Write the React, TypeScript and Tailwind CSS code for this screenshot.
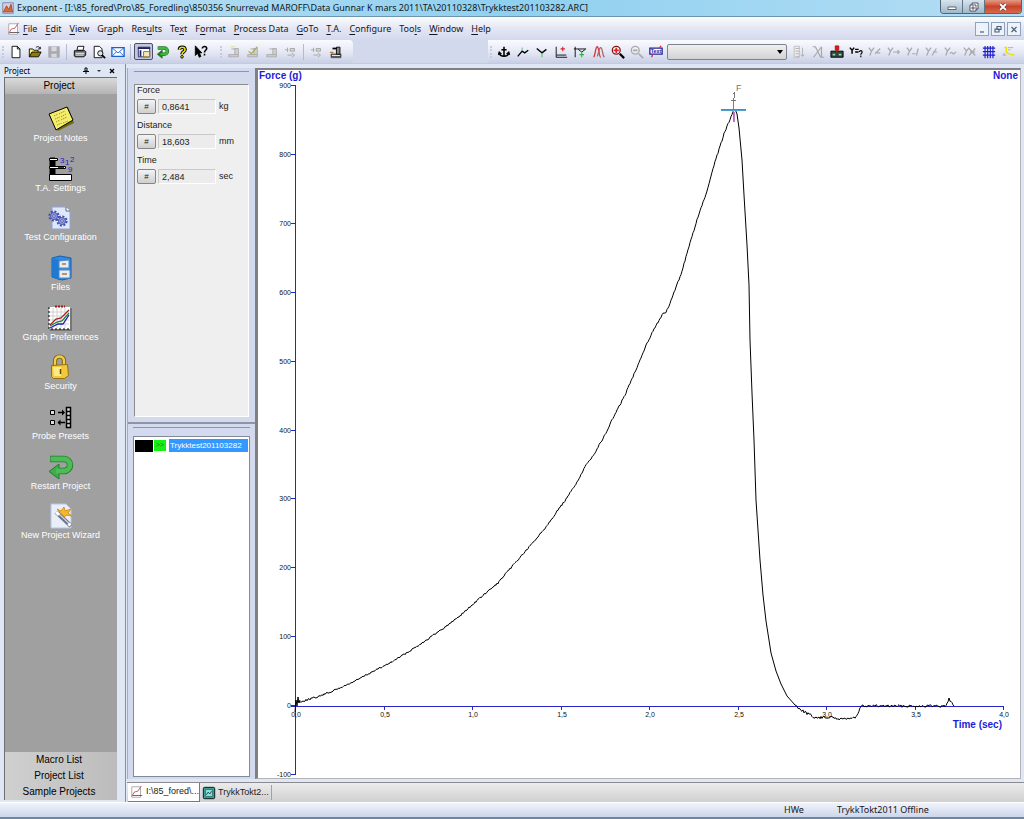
import type { ReactNode } from "react";

/* ---------- data ---------- */

const MENUS: [string, string, string][] = [
  ["", "F", "ile"],
  ["", "E", "dit"],
  ["", "V", "iew"],
  ["Gr", "a", "ph"],
  ["Res", "u", "lts"],
  ["Te", "x", "t"],
  ["F", "o", "rmat"],
  ["", "P", "rocess Data"],
  ["", "G", "oTo"],
  ["", "T", ".A."],
  ["", "C", "onfigure"],
  ["Too", "l", "s"],
  ["", "W", "indow"],
  ["", "H", "elp"],
];

const READOUTS = [
  { label: "Force", value: "0,8641", unit: "kg" },
  { label: "Distance", value: "18,603", unit: "mm" },
  { label: "Time", value: "2,484", unit: "sec" },
];

const CURVE: [number, number][] = [
  [298, 702], [303, 701], [310, 699], [320, 696], [330, 692], [340, 688],
  [355, 681], [370, 673], [390, 663], [408, 652], [425, 641], [448, 625],
  [462, 614], [480, 598], [498, 583], [515, 563], [531, 545], [545, 528],
  [558, 510], [567, 498], [580, 477], [585, 467], [594, 454], [605, 435],
  [612, 420], [625, 395], [634, 374], [642, 355], [648, 341], [655, 327],
  [663, 314], [666, 312], [669, 306], [675, 290], [681, 274], [688, 250],
  [697, 220], [708, 188], [715, 162], [724, 134], [730, 119], [734, 109],
];

const FALL =
  "735,109 737,114 739,128 742,160 744,195 747,245 749,285 750,340 752,393 754,440 755,470 756,500 758,530 760,560 763,595 766,621 771,653 776,671 781,684 787,696 795,705";

const TAIL: [number, number][] = [
  [795, 705], [803, 711], [810, 715], [816, 718], [830, 717], [838, 719],
  [855, 718], [858, 714], [861, 706], [946, 706], [949, 699], [954, 706],
];

function noisy(points: [number, number][], amplitude: number) {
  const out: string[] = [];
  let seed = 7;
  for (let i = 0; i < points.length - 1; i++) {
    const [x0, y0] = points[i];
    const [x1, y1] = points[i + 1];
    for (let x = x0; x < x1; x++) {
      seed = (seed * 1103515245 + 12345) % 2147483648;
      const jitter = (seed / 2147483648 - 0.5) * 2 * amplitude;
      out.push(`${x},${(y0 + ((y1 - y0) * (x - x0)) / (x1 - x0) + jitter).toFixed(1)}`);
    }
  }
  const last = points[points.length - 1];
  out.push(`${last[0]},${last[1]}`);
  return out.join(" ");
}

const RISE_POINTS = noisy(CURVE, 0.9);
const TAIL_POINTS = noisy(TAIL, 1.3);

/* ---------- icons ---------- */

function Glyph({ children, size = "size-4" }: { children: ReactNode; size?: string }) {
  return (
    <svg viewBox="0 0 16 16" className={`${size} shrink-0`} fill="none" stroke="#000" strokeWidth="1" aria-hidden="true">
      {children}
    </svg>
  );
}

const chartPage = (
  <Glyph size="size-[14px]">
    <path d="M2 2h10v12H2z" fill="#fff" stroke="#a9a3a3" />
    <path d="M13 1l-4 6-4 1-3 5" stroke="#c04a4a" />
    <path d="M3 12h11" stroke="#555" />
  </Glyph>
);

const arrowBack = (
  <Glyph size="size-[14px]">
    <path d="M2 3.500h7.500a3.500 3.500 0 0 1 0 7H6" stroke="#1c7a1c" strokeWidth="4" />
    <path d="M7 6v9L1.500 10.500z" fill="#1c7a1c" stroke="#1c7a1c" />
    <path d="M2 3.500h7.500a3.500 3.500 0 0 1 0 7H5" stroke="#43b843" strokeWidth="2.400" />
  </Glyph>
);

const grayMachine = (extra: ReactNode) => (
  <Glyph size="size-[14px]">
    <path d="M2 13.500h11V11H2zM9 11V4h4v7M5 4.500h5" stroke="#a8a8a8" fill="#d0d0d0" />
    {extra}
  </Glyph>
);

const grayFlow = (
  <Glyph size="size-[14px]">
    <path d="M1 5.500h4M4 3v5M7 4h5v3H7zM4 11.500h5M9 9l3 2.500L9 14" stroke="#a4a4a4" fill="#d4d4d4" />
  </Glyph>
);

const grayY = (tail: string) => (
  <Glyph size="size-[14px]">
    <path d="M1 3l3 4 3-4M4 7L2 12" stroke="#a9a9ae" strokeWidth="1.500" />
    <path d={tail} stroke="#a9a9ae" strokeWidth="1.400" />
  </Glyph>
);

type Tool = { name: string; icon: ReactNode; active?: boolean };

const FILE_TOOLS: Tool[] = [
  { name: "New", icon: <Glyph size="size-[14px]"><path d="M3.500 1.500h6l3 3v10h-9z" fill="#fff" /><path d="M9.500 1.500v3h3" /></Glyph> },
  { name: "Open", icon: <Glyph size="size-[14px]"><path d="M1.500 13.500v-9h4l1 1.500h5v2" fill="#ffef80" /><path d="M1.500 13.500l3-5.500h10.500l-3 5.500z" fill="#8c7a10" /><path d="M9 3c2-2 4-1 5 1M14 2v2.500h-2.500" /></Glyph> },
  { name: "Save", icon: <Glyph size="size-[14px]"><path d="M2 2h12v12H2z" fill="#a9a9b0" stroke="#a9a9b0" /><path d="M5 2h6v5H5zM5 10h6v4H5z" fill="#d8d8de" stroke="none" /></Glyph> },
];

const PRINT_TOOLS: Tool[] = [
  { name: "Print", icon: <Glyph size="size-[14px]"><path d="M4.500 6l1-4.500h7L11.500 6z" fill="#fff" /><path d="M1.500 6.500h12l1 1v4l-2 2h-10l-1-1z" fill="#777" /><path d="M3 9.500h10M3 11.500h9" stroke="#fff" /></Glyph> },
  { name: "Print Preview", icon: <Glyph size="size-[14px]"><path d="M2.500 1.500h6l3 3v10h-9z" fill="#fff" /><circle cx="9.500" cy="9.500" r="3" fill="#d8e4f0" /><path d="M11.500 11.500l3.500 3.500" strokeWidth="2" /></Glyph> },
  { name: "Mail", icon: <Glyph size="size-[14px]"><path d="M1 3h14v10H1z" fill="#fff" stroke="#1464d2" strokeWidth="1.500" /><path d="M1 3l7 6 7-6M1 13l5-5M15 13l-5-5" stroke="#1464d2" /></Glyph> },
];

const VIEW_TOOLS: Tool[] = [
  { name: "Project Bar", active: true, icon: <Glyph size="size-[14px]"><path d="M1.500 2.500h13v11h-13z" fill="#fff" stroke="#1f2360" /><path d="M1 3.500h14M4 6v7" stroke="#1f2360" strokeWidth="2" /><path d="M7.500 7.500h7v6h-7z" fill="#f4e9b4" stroke="#8a6a1a" /></Glyph> },
  { name: "Restart Project", icon: arrowBack },
  { name: "Help", icon: <Glyph size="size-[14px]"><path d="M5 5.500c0-4 6.500-4 6.500 0C11.500 8 8 7.500 8 10.500" strokeWidth="4" /><path d="M5 5.500c0-4 6.500-4 6.500 0C11.500 8 8 7.500 8 10.500" stroke="#f0e000" strokeWidth="1.800" /><circle cx="8" cy="13.500" r="1.500" fill="#f0e000" /></Glyph> },
  { name: "Context Help", icon: <Glyph size="size-[14px]"><path d="M1.500 1v11l2.500-2.500L6 14l2-1-2-4h3z" fill="#000" /><path d="M9.500 4c0-3 5-3 5 0 0 2-2.500 2-2.500 4.500M12 10v2" strokeWidth="1.800" /></Glyph> },
];

const TA_TOOLS: Tool[] = [
  { name: "Run Test", icon: grayMachine(<path d="M4 2h5" stroke="#d8d890" />) },
  { name: "Quick Test", icon: grayMachine(<path d="M3 7l3 3 7-8" stroke="#b0b050" strokeWidth="1.500" />) },
  { name: "Calibrate", icon: grayMachine(null) },
  { name: "Move Probe", icon: grayFlow },
];

const TA_TOOLS_2: Tool[] = [
  { name: "Connect", icon: grayFlow },
  { name: "Instrument", icon: <Glyph size="size-[14px]"><path d="M2 14.500h12" stroke="#555" /><path d="M2.500 10.500h11v3h-11z" fill="#e4e4e4" /><path d="M8.500 2.500h4v8h-4z" fill="#888" /><path d="M4 4h5" strokeWidth="2" /><path d="M1 8.500h4" stroke="#b07a40" strokeWidth="1.500" /></Glyph> },
];

const GRAPH_TOOLS: Tool[] = [
  { name: "Anchor", icon: <Glyph size="size-[14px]"><path d="M8 2v11M5 5.500h6M2.500 9c1 5 10 5 11 0" strokeWidth="1.800" /><path d="M1.500 11l1-3.500L5 10zM14.500 11l-1-3.500L11 10z" fill="#000" /></Glyph> },
  { name: "Peak", icon: <Glyph size="size-[14px]"><path d="M2 13l5-6 3 2 4-3" strokeWidth="1.500" /><path d="M7 3v3" stroke="#4b8" /></Glyph> },
  { name: "Trough", icon: <Glyph size="size-[14px]"><path d="M2 4l6 5 5-4" strokeWidth="1.500" /><path d="M8 10v4" stroke="#3b4" /></Glyph> },
  { name: "Threshold", icon: <Glyph size="size-[14px]"><path d="M2.500 2v12H15M3 11.500h11" /><path d="M10 2v5M7.500 4.500h5" stroke="#d22" strokeWidth="1.300" /></Glyph> },
  { name: "Baseline", icon: <Glyph size="size-[14px]"><path d="M2.500 2v12M1 4.500h14M6 5l4 3 4-3" /><path d="M10 8v6M7.500 11h5" stroke="#2b3" strokeWidth="1.300" /></Glyph> },
  { name: "Curves", icon: <Glyph size="size-[14px]"><path d="M2 14C4 10 4 2 6 2s2 12 4 12" stroke="#d33" strokeWidth="1.500" /><path d="M6 13C8 8 8 3 10 3s2 9 4 11" stroke="#a66" strokeWidth="1.500" /></Glyph> },
  { name: "Zoom In", icon: <Glyph size="size-[14px]"><circle cx="6" cy="6" r="4.500" fill="#fff" stroke="#7a1a1a" strokeWidth="1.500" /><path d="M6 3v6M3 6h6" stroke="#d22" strokeWidth="2" /><path d="M10 10l5 5" strokeWidth="2.500" /></Glyph> },
  { name: "Zoom Out", icon: <Glyph size="size-[14px]"><circle cx="6" cy="6" r="4.500" stroke="#aaa" strokeWidth="1.500" /><path d="M3.500 6h5M10 10l5 5" stroke="#aaa" strokeWidth="2" /></Glyph> },
  { name: "Text Label", icon: <Glyph size="size-[14px]"><path d="M1 3.500h14v7H1z" fill="#fff" stroke="#22229a" strokeWidth="1.500" /><text x="8" y="9" textAnchor="middle" fontFamily="Liberation Sans, sans-serif" fontSize="6" fontWeight="bold" fill="#22229a" stroke="none">Text</text><path d="M3 14l1-3M12 3l2-2" stroke="#d22" strokeWidth="1.500" /></Glyph> },
];

const RESULT_TOOLS: Tool[] = [
  { name: "Sort", icon: <Glyph size="size-[14px]"><path d="M2.500 1.500h6v13h-6z" fill="#eee" stroke="#bbb" /><path d="M4 4h4M4 7h4M4 10h4M4 13h4M12 3v10M10 11l2 2 2-2" stroke="#adadad" /></Glyph> },
  { name: "Delete", icon: <Glyph size="size-[14px]"><path d="M2 2h3l6 12h4M12 2L3 14M12 2v12" stroke="#a8a8a8" strokeWidth="1.400" /></Glyph> },
  { name: "Macro", icon: <Glyph size="size-[14px]"><path d="M1 7h14v7H1z" fill="#2b4a3c" /><path d="M3 11h3M10 11h3" stroke="#9fd0b0" strokeWidth="2" /><path d="M6 1h4v4L8 8 6 5z" fill="#e01818" stroke="#b01010" /></Glyph> },
  { name: "Y Query", icon: <Glyph size="size-[14px]"><path d="M1 3l2.500 3L6 3M3.500 6v4M7 5h4M7 8h4" strokeWidth="1.700" /><path d="M12 8c0-2 3-2 3 0s-1.500 1.500-1.500 3M13.500 12v2" strokeWidth="1.300" /></Glyph> },
  { name: "Y Divide", icon: grayY("M8 10l6-6M10 9h4") },
  { name: "Y Minus", icon: grayY("M7 8h7M12 6l2 2-2 2") },
  { name: "Y Integral", icon: grayY("M7 10h4M12 12l2-8") },
  { name: "Y Slope", icon: grayY("M8 12l5-8M9 8h5") },
  { name: "Y Smooth", icon: grayY("M7 10c2-5 3 3 5-1l2-1") },
  { name: "Y Cross", icon: grayY("M7 4l7 8M14 4l-7 8M8 8h6") },
  { name: "Grid", icon: <Glyph size="size-[14px]"><path d="M3.500 1v14M6.500 1v14M9.500 1v14M12.500 1v14M1 3.500h14M1 7.500h14M1 11.500h14" stroke="#1c1cd0" strokeWidth="1.300" /></Glyph> },
  { name: "Mark", icon: <Glyph size="size-[14px]"><path d="M2 11.500h4M4 3h2M8 3h6M8 5.500h3M3.500 9v3" stroke="#aaa" /><path d="M6 2v6c2 3 5 2 9 4" stroke="#ece400" strokeWidth="1.800" /></Glyph> },
];

function BigIcon({ children }: { children: ReactNode }) {
  return (
    <svg viewBox="0 0 26 26" className="size-[26px] overflow-visible" fill="none" stroke="#000" aria-hidden="true">
      {children}
    </svg>
  );
}

const gear = (cx: number, cy: number) => (
  <g>
    <circle cx={cx} cy={cy} r="4.500" stroke="#4450a8" strokeWidth="2.200" strokeDasharray="2 1.500" />
    <circle cx={cx} cy={cy} r="3.500" fill="#8f9be0" stroke="#4f5cb8" />
    <circle cx={cx} cy={cy} r="1.300" fill="#eef" stroke="#333a80" strokeWidth="0.700" />
  </g>
);

const PROJECT_ITEMS: { label: string; icon: ReactNode }[] = [
  {
    label: "Project Notes",
    icon: (
      <BigIcon>
        <path d="M1 9L20 1l6 16L10 25z" fill="#6e6a18" stroke="none" />
        <path d="M1 8L19 1l6 13L8 24z" fill="#f4ee6a" />
        <path d="M6 10l4-2M11 8l6-3M7 13l5-2M13 11l5-3M8 16l4-2M13 14l6-3M9 19l5-2M15 17l5-2" stroke="#8a7a20" strokeWidth="0.800" strokeDasharray="1.500 0.800" />
      </BigIcon>
    ),
  },
  {
    label: "T.A. Settings",
    icon: (
      <BigIcon>
        <path d="M2 2v22h5V2z" fill="#000" />
        <path d="M1.500 2.500h8v2h-8zM1.500 10.500h16v2h-16zM1.500 18.500h22v6h-22z" fill="#fff" />
        <path d="M10 11.500h6" stroke="#22c" />
        <g fill="#1c1cc8" stroke="none" fontFamily="Liberation Sans, sans-serif" fontSize="8">
          <text x="12" y="7">3</text>
          <text x="17" y="9">1</text>
          <text x="22" y="6">2</text>
          <text x="20" y="16">9</text>
        </g>
      </BigIcon>
    ),
  },
  {
    label: "Test Configuration",
    icon: (
      <BigIcon>
        <path d="M5 2h14l4 4v18H5z" fill="#dfe8fb" stroke="#8fa4d8" />
        <path d="M19 2v4h4" fill="#fff" stroke="#55658f" />
        {gear(7, 11)}
        {gear(15, 16)}
      </BigIcon>
    ),
  },
  {
    label: "Files",
    icon: (
      <BigIcon>
        <path d="M4 3l8-2 11 2v20l-9 2-10-3z" fill="#2f8be0" stroke="#1a5fae" />
        <path d="M4 3l7 2v20l-7-3z" fill="#1f7ad4" stroke="none" />
        <path d="M11 6l10-1v8H11zM11 15h11v8H11z" fill="#e4eefb" stroke="#5a86bc" />
        <path d="M14 9h4M14 19h5" stroke="#a07a40" strokeWidth="1.500" />
      </BigIcon>
    ),
  },
  {
    label: "Graph Preferences",
    icon: (
      <BigIcon>
        <path d="M3 3h22v23H3z" fill="#777" stroke="none" />
        <path d="M2 2h21v22H2z" fill="#fff" stroke="none" />
        <path d="M6 3v20M10 3v20M14 3v20M18 3v20M3 7h19M3 11h19M3 15h19M3 19h19" stroke="#d0d0d0" />
        <path d="M2 2v22h21" strokeDasharray="2 2" />
        <path d="M3 20l6-6 5-1 8-8" stroke="#a02020" strokeWidth="1.300" />
        <path d="M3 21l7-4 5-1 7-8" stroke="#208040" strokeWidth="1.300" />
        <path d="M3 23l8-4 5 0 6-9" stroke="#2222b0" strokeWidth="1.300" />
        <path d="M8 1.500h10" stroke="#a01818" strokeWidth="2" strokeDasharray="2 1" />
      </BigIcon>
    ),
  },
  {
    label: "Security",
    icon: (
      <BigIcon>
        <path d="M8 12V7c0-6 9-6 9 0v5" stroke="#7a5a08" strokeWidth="4.200" />
        <path d="M8 12V7c0-6 9-6 9 0v5" stroke="#f0d050" strokeWidth="2.400" />
        <path d="M4.500 11.500l16-1 1 11-4 3h-11l-2-2z" fill="#f2c83c" stroke="#94700e" />
        <path d="M6 13h8v9H7z" fill="#fbe98a" stroke="none" />
        <path d="M13.500 15v5" stroke="#6a4a00" strokeWidth="1.500" />
      </BigIcon>
    ),
  },
  {
    label: "Probe Presets",
    icon: (
      <BigIcon>
        <path d="M2.500 6.500h4v4h-4zM2.500 16.500h4v4h-4z" fill="#ddd" />
        <path d="M10 8.500h6M10 18.500h7" strokeWidth="1.300" />
        <path d="M14 5.500l3 3-3 3zM12.500 15.500l-3 3 3 3z" fill="#000" stroke="none" />
        <path d="M18.500 3.500h4v4h-4zM18.500 7.500h4v4h-4zM18.500 11.500h4v4h-4zM18.500 15.500h4v4h-4zM18.500 19.500h4v4h-4z" fill="#ddd" strokeWidth="1.500" />
      </BigIcon>
    ),
  },
  {
    label: "Restart Project",
    icon: (
      <BigIcon>
        <path d="M2 5h14a6 6 0 0 1 0 12h-5" stroke="#247a2c" strokeWidth="6.500" />
        <path d="M11 10v15L1 17.500z" fill="#3fae4a" stroke="#247a2c" />
        <path d="M2.500 5H16a6 6 0 0 1 0 12H8" stroke="#4cbc56" strokeWidth="4.800" />
      </BigIcon>
    ),
  },
  {
    label: "New Project Wizard",
    icon: (
      <BigIcon>
        <path d="M3 1h15l5 5v19H3z" fill="#e9eefb" stroke="#b8c4e4" />
        <path d="M9 6l4 2 3-4 1 4 6-2-3 4 4 3-6-1-2 3-2-4-5 1 3-3z" fill="#f4b830" stroke="#d89418" />
        <path d="M8 9l15 14" stroke="#6c7084" strokeWidth="4.200" />
        <path d="M9 9l13 12.500" stroke="#c8ccd8" strokeWidth="1.500" />
        <path d="M8 9l3 3M20.500 20.500l2 2" stroke="#fff" strokeWidth="3" />
      </BigIcon>
    ),
  },
];

/* ---------- pieces ---------- */

function ToolButtons({ tools }: { tools: Tool[] }) {
  return (
    <>
      {tools.map((t) => (
        <button
          key={t.name}
          type="button"
          aria-label={t.name}
          className={
            t.active
              ? "flex h-[17px] w-[19px] shrink-0 items-center justify-center rounded-xs border border-[#4a4f6e] bg-[#c3c8dc]"
              : "flex h-[17px] w-[19px] shrink-0 items-center justify-center"
          }
        >
          {t.icon}
        </button>
      ))}
    </>
  );
}

function Separator() {
  return <div className="mx-[3px] h-4 w-px shrink-0 bg-[#b4bad2]" />;
}

function Grip() {
  return <div className="mx-[2px] h-3 w-0 shrink-0 border-l-2 border-dotted border-[#c6cbe0]" />;
}

function TitleBar() {
  return (
    <header className="flex h-[17px] shrink-0 items-start justify-between border-b border-[#6d93ad] bg-linear-to-r from-[#bfe0f2] via-[#8fd0f0] to-[#b4def4]">
      <div className="flex h-4 items-center gap-[3px] pl-[2px]">
        <Glyph size="size-3">
          <path d="M1 1h14v14H1z" fill="#d8cfe0" stroke="#7a6a8a" />
          <path d="M2 13l4-8 3 5 3-7 2 10z" fill="#d8703c" stroke="#963a20" />
        </Glyph>
        <h1 className="font-['Noto_Sans','Open_Sans',sans-serif] text-[9px] whitespace-nowrap text-[#101820]">
          Exponent - [I:\85_fored\Pro\85_Foredling\850356 Snurrevad MAROFF\Data Gunnar K mars 2011\TA\20110328\Trykktest201103282.ARC]
        </h1>
      </div>
      <div className="mr-[2px] flex h-[14px] overflow-hidden rounded-b border border-t-0 border-[#4f6474]">
        <button type="button" aria-label="Minimize" className="flex w-[22px] items-center justify-center border-r border-[#5f7484] bg-linear-to-b from-[#d6e4ee] to-[#9fb8c8]">
          <svg viewBox="0 0 10 8" className="h-2 w-[10px]"><path d="M1 4h8v2.500H1z" fill="#fff" stroke="#445" strokeWidth="0.800" /></svg>
        </button>
        <button type="button" aria-label="Restore" className="flex w-[22px] items-center justify-center border-r border-[#5f7484] bg-linear-to-b from-[#d6e4ee] to-[#9fb8c8]">
          <svg viewBox="0 0 10 10" className="size-[10px]" fill="#fff" stroke="#445" strokeWidth="0.900"><path d="M3 1h6v6H3z" /><path d="M1 3h6v6H1zM3 5h2v2H3z" /></svg>
        </button>
        <button type="button" aria-label="Close" className="flex w-9 items-center justify-center bg-linear-to-b from-[#e29a84] via-[#c8432a] to-[#d8694c]">
          <svg viewBox="0 0 10 8" className="h-2 w-[10px]"><path d="M2 1l6 6M8 1L2 7" stroke="#533" strokeWidth="3" /><path d="M2 1l6 6M8 1L2 7" stroke="#fff" strokeWidth="1.800" /></svg>
        </button>
      </div>
    </header>
  );
}

function MenuBar() {
  return (
    <nav className="flex h-[23px] shrink-0 items-center bg-linear-to-b from-[#fbfcfe] via-[#e3e6f4] to-[#d3d9ee] pl-[7px] font-['Noto_Sans','Open_Sans',sans-serif] text-[9px] text-[#14161c]">
      {chartPage}
      <div className="ml-[2px] flex flex-1 gap-2">
        {MENUS.map(([a, b, c]) => (
          <button key={a + b + c} type="button" className="whitespace-pre">
            {a}
            <span className="underline underline-offset-2">{b}</span>
            {c}
          </button>
        ))}
      </div>
      <div className="mr-[3px] flex gap-[2px]">
        {[
          ["Minimize document", "M3 8h4"],
          ["Restore document", "M4 2.500h4v3H4zM2 5h4v3H2z"],
          ["Close document", "M2.500 3l5 5M7.500 3l-5 5"],
        ].map(([name, d]) => (
          <button key={name} type="button" aria-label={name} className="flex h-[14px] w-[14px] items-center justify-center border border-[#8ea3c0] bg-[#eef3fa]">
            <svg viewBox="0 0 10 10" className="size-[10px]" fill="none" stroke="#4d5f7c" strokeWidth="1.200"><path d={d} /></svg>
          </button>
        ))}
      </div>
    </nav>
  );
}

function Toolbar() {
  return (
    <div role="toolbar" className="flex h-6 shrink-0 items-stretch border-b border-[#c6cbdc] bg-[#d3d9ec]">
      <div className="flex items-center rounded-r bg-linear-to-b from-[#fafbfe] via-[#e6e9f5] to-[#c9cfe6] pr-2">
        <Grip />
        <ToolButtons tools={FILE_TOOLS} />
        <Separator />
        <ToolButtons tools={PRINT_TOOLS} />
        <Separator />
        <ToolButtons tools={VIEW_TOOLS} />
        <div className="w-2" />
        <Grip />
        <ToolButtons tools={TA_TOOLS} />
        <Separator />
        <ToolButtons tools={TA_TOOLS_2} />
      </div>
      <div className="flex-1" />
      <div className="flex items-center bg-linear-to-b from-[#fafbfe] via-[#e6e9f5] to-[#c9cfe6] pr-[7px]">
        <Grip />
        <ToolButtons tools={GRAPH_TOOLS} />
        <div className="relative mx-[2px] flex w-[120px] items-center">
          <select aria-label="Active graph" className="h-4 w-full appearance-none rounded-xs border border-[#7d8290] bg-linear-to-b from-[#f0f0f0] to-[#d2d2d4] text-[9px]">
            <option></option>
          </select>
          <span className="pointer-events-none absolute right-1 border-x-3 border-t-4 border-x-transparent border-t-black" />
        </div>
        <ToolButtons tools={RESULT_TOOLS} />
      </div>
    </div>
  );
}

function ProjectBar() {
  return (
    <aside className="flex w-[126px] shrink-0 flex-col border-r border-[#8a8d98] bg-[#dfe6f4] pr-2 pb-[2px] pl-1">
      <div className="flex h-[13px] shrink-0 items-center justify-between font-['Noto_Sans','Open_Sans',sans-serif] text-[8px] text-black">
        <span>Project</span>
        <span className="flex items-center gap-2 pr-[2px]">
          <button type="button" aria-label="Pin">
            <svg viewBox="0 0 6 7" className="h-[7px] w-[6px]" stroke="#000" fill="none"><path d="M2 1h2v3H2zM0 4.500h6M3 5v2" /></svg>
          </button>
          <button type="button" aria-label="Options">
            <svg viewBox="0 0 4 4" className="size-1"><path d="M0 1h4L2 3z" fill="#333" /></svg>
          </button>
          <button type="button" aria-label="Close panel">
            <svg viewBox="0 0 6 6" className="size-[6px]"><path d="M1 1l4 4M5 1L1 5" stroke="#000" strokeWidth="1.400" /></svg>
          </button>
        </span>
      </div>
      <div className="flex min-h-0 flex-1 flex-col border-t border-l border-[#6f6f72] bg-[#a0a0a0] font-['Liberation_Sans',sans-serif]">
        <button type="button" className="h-4 shrink-0 bg-linear-to-b from-[#dadada] to-[#b4b4b4] pr-1 text-center text-[10px] leading-4 text-black">
          Project
        </button>
        <ul className="mt-[6px] grid h-[447px] shrink-0 grid-rows-9">
          {PROJECT_ITEMS.map((item) => (
            <li key={item.label} className="flex justify-center pr-px">
              <button type="button" className="flex flex-col items-center pt-[6px] text-[9px] leading-3 whitespace-nowrap text-white">
                {item.icon}
                <span>{item.label}</span>
              </button>
            </li>
          ))}
        </ul>
        <div className="flex-1" />
        {["Macro List", "Project List", "Sample Projects"].map((name) => (
          <button key={name} type="button" className="h-4 shrink-0 bg-linear-to-r from-[#d0d0d0] to-[#bcbcbc] pr-1 text-center text-[10px] leading-4 text-black">
            {name}
          </button>
        ))}
      </div>
    </aside>
  );
}

function ReadoutPanel() {
  return (
    <section className="flex h-[354px] shrink-0 flex-col px-[6px] pt-[3px] pb-[5px] font-['Liberation_Sans',sans-serif] text-[9px] text-[#222]">
      <div className="mb-3 h-px shrink-0 bg-[#8f95a6]" />
      <div className="flex-1 border border-t-[#8c8c8c] border-r-white border-b-white border-l-[#8c8c8c] bg-[#efefef]">
        {READOUTS.map((r) => (
          <div key={r.label} className="h-[35px] px-[2px]">
            <label htmlFor={r.label} className="block leading-[11px]">{r.label}</label>
            <div className="mt-[3px] flex h-[15px] items-center">
              <button type="button" aria-label={`${r.label} format`} className="h-[15px] w-[19px] shrink-0 rounded-xs border border-[#858585] bg-linear-to-b from-[#f4f4f4] to-[#cfcfcf] text-[8px] leading-[13px]">
                #
              </button>
              <input id={r.label} readOnly value={r.value} className="ml-[2px] h-[15px] w-[58px] border border-t-[#c9c9c9] border-r-white border-b-white border-l-[#c9c9c9] bg-[#ececec] px-[3px] text-[9px]" />
              <span className="ml-[3px]">{r.unit}</span>
            </div>
          </div>
        ))}
      </div>
    </section>
  );
}

function GraphListPanel() {
  return (
    <section className="flex min-h-0 flex-1 flex-col border-t-2 border-[#8f95a6] px-[5px] pt-[3px] pb-[2px]">
      <div className="mb-2 h-px shrink-0 bg-[#8f95a6]" />
      <ul className="flex-1 border border-[#83889a] bg-white px-px pt-[2px] font-['Liberation_Sans',sans-serif]">
        <li className="flex h-[13px] items-center gap-[1px] text-[8px]">
          <span className="h-3 w-[18px] shrink-0 bg-black" />
          <span className="flex h-[11px] w-3 shrink-0 items-center justify-center bg-[#14f014] text-[7px] text-[#7a5a10]">&gt;&gt;</span>
          <button type="button" className="ml-[2px] h-[13px] flex-1 overflow-hidden bg-[#3399ff] pl-px text-left leading-[13px] text-white">
            Trykktest201103282
          </button>
        </li>
      </ul>
    </section>
  );
}

function ForceChart() {
  const xTicks = ["0,0", "0,5", "1,0", "1,5", "2,0", "2,5", "3,0", "3,5", "4,0"];
  const yTicks = [900, 800, 700, 600, 500, 400, 300, 200, 100, 0, -100];
  return (
    <svg viewBox="258 70 762 708" className="block h-full w-full" fontFamily="Liberation Sans, sans-serif" fill="none" role="img" aria-label="Force against time">
      <g stroke="#2626c8" strokeWidth="1" shapeRendering="crispEdges">
        <path d="M295.500 85v690M291 706.500h713" />
        {yTicks.map((v, i) => (
          <path key={v} d={`M291 ${Math.round(85 + i * 68.9) + 0.5}h5`} />
        ))}
        {xTicks.map((t, i) => (
          <path key={t} d={`M${Math.round(295 + i * 88.5) + 0.5} 706v4`} />
        ))}
      </g>
      <g fill="#111" fontSize="7">
        {yTicks.map((v, i) => (
          <text key={v} x="291" y={Math.round(88 + i * 68.9)} textAnchor="end">{v}</text>
        ))}
        {xTicks.map((t, i) => (
          <text key={t} x={Math.round(296 + i * 88.5)} y="717" textAnchor="middle">{t}</text>
        ))}
      </g>
      <g fill="#1c1cd8" fontSize="10" fontWeight="bold">
        <text x="259" y="79">Force (g)</text>
        <text x="1018" y="79" textAnchor="end">None</text>
        <text x="1002" y="728" textAnchor="end">Time (sec)</text>
      </g>
      <g stroke="#000" strokeWidth="1" strokeLinejoin="round">
        <polyline points="295,712 296,700 297,706 298,697 299,703 300,700" />
        <polyline points={RISE_POINTS} />
        <polyline points={FALL} />
        <polyline points={TAIL_POINTS} />
      </g>
      <g strokeWidth="1" shapeRendering="crispEdges">
        <path d="M721 109.500h25" stroke="#a65bc0" />
        <path d="M721 110.500h25" stroke="#4f9fd0" />
        <path d="M733.500 110v12" stroke="#4f9fd0" />
        <path d="M734.500 112v10" stroke="#c07ad0" />
        <path d="M733.500 98v11" stroke="#20b070" />
        <path d="M731 100.500h5M734.500 92v6M733 93.500h2" stroke="#777" />
      </g>
      <text x="736" y="91" fontSize="9" fill="#777">F</text>
    </svg>
  );
}

function DocumentTabs() {
  return (
    <div className="flex h-5 shrink-0 items-stretch border-t border-[#8c8c90] bg-linear-to-b from-[#ececec] to-[#cfcfcf] pl-px font-['Liberation_Sans',sans-serif] text-[9px] text-[#222]">
      <button type="button" className="flex w-[72px] items-center gap-[2px] border-r border-b border-[#77777c] bg-white pl-[2px] whitespace-nowrap">
        {chartPage}
        I:\85_fored\...
      </button>
      <button type="button" className="my-[2px] flex w-[72px] items-center gap-[2px] border-r border-[#a2a2a2] pl-[2px] whitespace-nowrap">
        <Glyph size="size-[14px]">
          <rect x="1.500" y="1.500" width="13" height="13" rx="1.500" fill="#3f9f98" />
          <path d="M4 4h8v8H4z" fill="#8fe0d4" stroke="#2a7a74" />
          <path d="M5 10l2-3 2 2 2-3" stroke="#0d3d44" />
        </Glyph>
        TrykkTokt2...
      </button>
    </div>
  );
}

export default function App() {
  return (
    <div className="flex h-screen flex-col overflow-hidden bg-[#dfe6f4]">
      <TitleBar />
      <MenuBar />
      <Toolbar />
      <div className="flex min-h-0 flex-1">
        <ProjectBar />
        <main className="flex min-w-0 flex-1 flex-col pl-px">
          <div className="mt-1 flex min-h-0 flex-1">
            <div className="flex w-[128px] shrink-0 flex-col border-l border-[#a7abba] bg-[#d3daee]">
              <ReadoutPanel />
              <GraphListPanel />
            </div>
            <div className="mr-[3px] min-w-0 flex-1 border border-t-2 border-l-3 border-[#b4b4b8] border-t-[#808084] border-l-[#808084] bg-white">
              <ForceChart />
            </div>
          </div>
          <div className="pt-[3px]">
            <DocumentTabs />
          </div>
        </main>
      </div>
      <footer className="flex h-[15px] shrink-0 items-center justify-end border-t border-white bg-linear-to-b from-[#f0f3fb] to-[#cdd6ea] font-['Noto_Sans','Open_Sans',sans-serif] text-[9px] text-[#16181e]">
        <span className="w-[53px]">HWe</span>
        <span className="w-[187px]">TrykkTokt2011 Offline</span>
      </footer>
      <div className="h-[2px] shrink-0 bg-[#6d86a0]" />
    </div>
  );
}
